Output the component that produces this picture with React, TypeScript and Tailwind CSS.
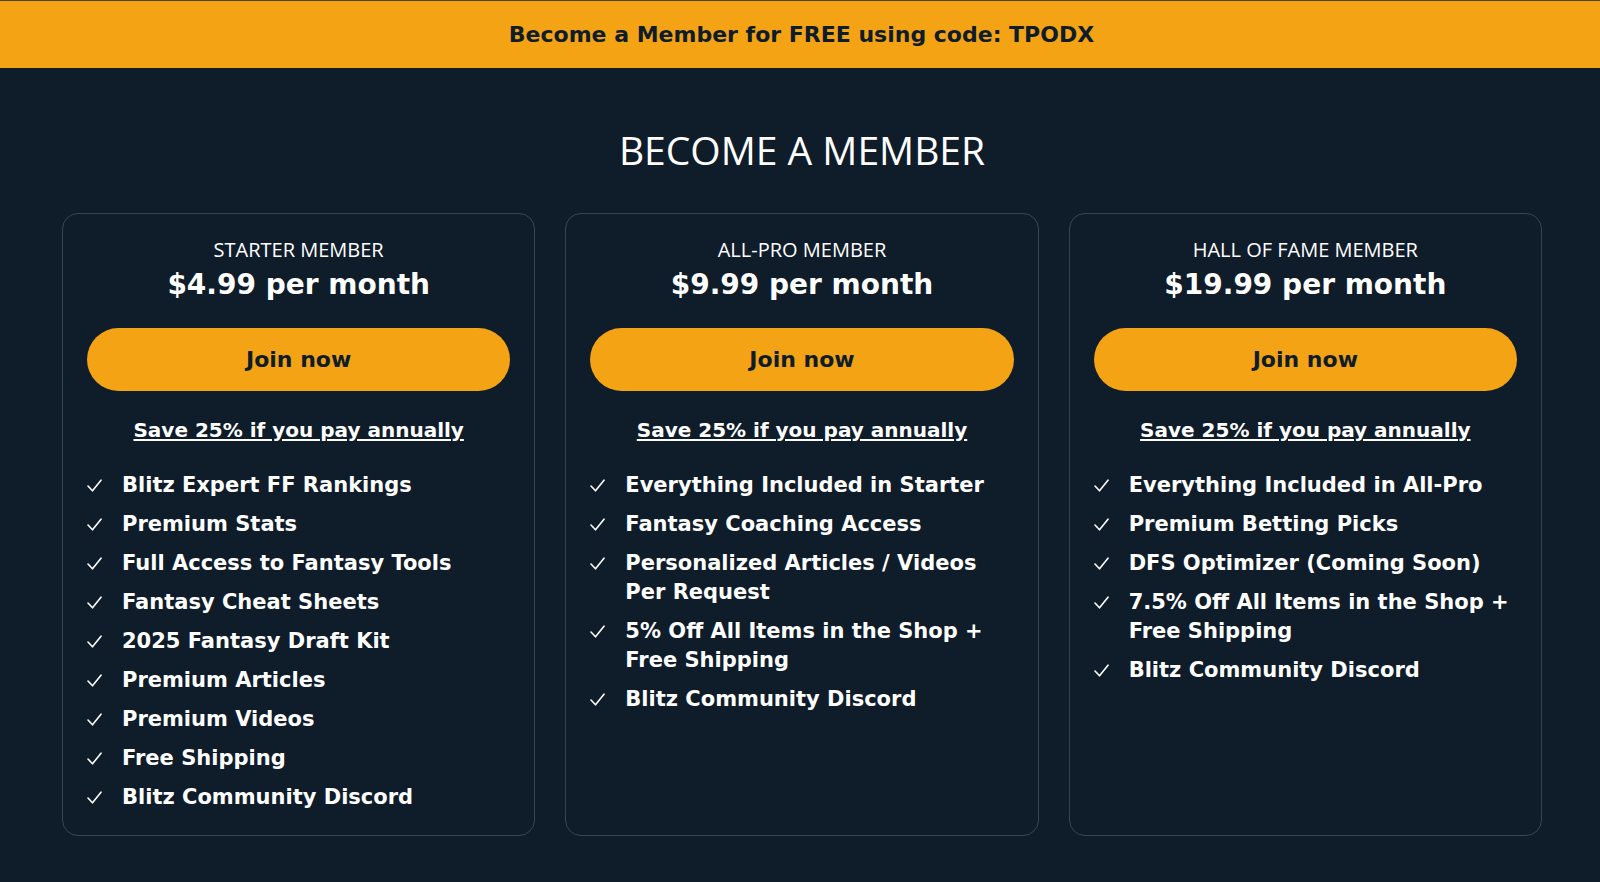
const plans = [
  {
    name: 'STARTER MEMBER',
    price: '$4.99 per month',
    features: [
      'Blitz Expert FF Rankings',
      'Premium Stats',
      'Full Access to Fantasy Tools',
      'Fantasy Cheat Sheets',
      '2025 Fantasy Draft Kit',
      'Premium Articles',
      'Premium Videos',
      'Free Shipping',
      'Blitz Community Discord',
    ],
  },
  {
    name: 'ALL-PRO MEMBER',
    price: '$9.99 per month',
    features: [
      'Everything Included in Starter',
      'Fantasy Coaching Access',
      'Personalized Articles / Videos Per Request',
      '5% Off All Items in the Shop + Free Shipping',
      'Blitz Community Discord',
    ],
  },
  {
    name: 'HALL OF FAME MEMBER',
    price: '$19.99 per month',
    features: [
      'Everything Included in All-Pro',
      'Premium Betting Picks',
      'DFS Optimizer (Coming Soon)',
      '7.5% Off All Items in the Shop + Free Shipping',
      'Blitz Community Discord',
    ],
  },
];

const wide = { fontFamily: '"DejaVu Sans", Verdana, sans-serif' };
const open = { fontFamily: '"Open Sans", "Noto Sans", sans-serif' };

function Tick() {
  return (
    <svg width="15" height="13" viewBox="0 0 15 13" fill="none" className="mt-[8px] shrink-0">
      <polyline points="1,7 5.5,11.8 14,1.2" stroke="currentColor" strokeWidth="1.6" strokeLinecap="round" strokeLinejoin="round" />
    </svg>
  );
}

export default function App() {
  return (
    <div className="min-h-[882px] bg-[#0f1c2a] text-white">
      <div className="border-t border-[#4d4430] bg-[#f3a313] h-[68px] pl-[3px] flex items-center justify-center">
        <p style={wide} className="text-[22px] leading-[28px] font-bold text-[#0f1c2a]">
          Become a Member for FREE using code: TPODX
        </p>
      </div>

      <section className="pt-[58px] pb-12 pl-[4px]">
        <h1 style={open} className="text-center text-[39px] leading-[48px] font-normal">
          BECOME A MEMBER
        </h1>

        <div className="max-w-[1480px] mx-auto mt-[39px] grid grid-cols-3 gap-[30px]">
          {plans.map((plan) => (
            <div key={plan.name} className="border border-[#3a4552] rounded-[16px] px-[24px] pt-[23px] pb-[23px]">
              <p style={open} className="text-center text-[20px] leading-[26px] font-normal">{plan.name}</p>
              <p style={wide} className="text-center text-[28px] leading-[36px] font-bold mt-[4px]">
                {plan.price}
              </p>
              <button
                style={wide}
                className="mt-[25px] w-full h-[63px] rounded-full bg-[#f3a313] text-[#0f1c2a] text-[22px] font-bold"
              >
                Join now
              </button>
              <div className="mt-[25px] text-center leading-[28px]">
                <a style={wide} href="#" className="text-[20px] leading-[28px] font-bold underline underline-offset-[2px] decoration-[2px]">
                  Save 25% if you pay annually
                </a>
              </div>
              <ul className="mt-[26px] flex flex-col gap-[10px]">
                {plan.features.map((f) => (
                  <li key={f} className="flex items-start gap-[20px]">
                    <Tick />
                    <span style={wide} className="text-[21px] leading-[29px] font-bold">
                      {f}
                    </span>
                  </li>
                ))}
              </ul>
            </div>
          ))}
        </div>
      </section>
    </div>
  );
}
